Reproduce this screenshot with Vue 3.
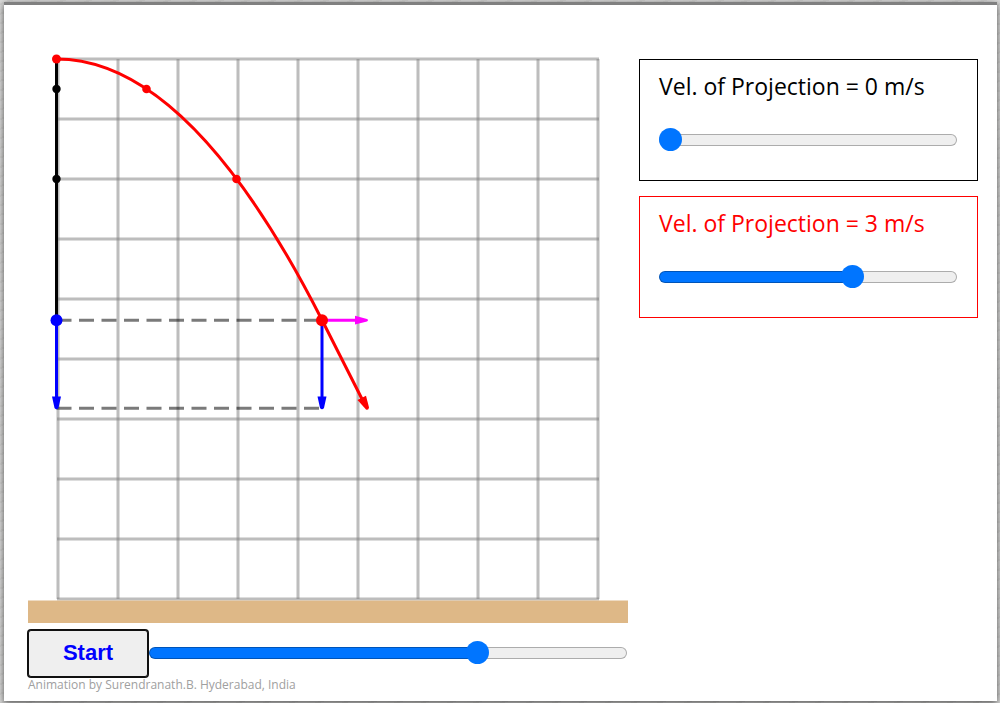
<script setup>
import { reactive, computed } from 'vue'

const state = reactive({ first: 0, second: 3, time: 70 })

const gridX = Array.from({ length: 10 }, (_, i) => 58 + i * 60)
const gridY = Array.from({ length: 10 }, (_, i) => 59 + i * 60)

const maxSpeed = 4.5
const fill = (ratio) => ({
  '--fill': `calc(12px + (100% - 24px) * ${ratio})`
})
const firstFill = computed(() => (Number(state.first) === 0 ? { '--fill': '0px' } : fill(state.first / maxSpeed)))
const secondFill = computed(() => fill(state.second / maxSpeed))
const timeFill = computed(() => fill(state.time / 100))
</script>

<template>
  <main class="sheet">
    <section class="stage">
      <svg class="plot" viewBox="28 23 600 600" role="img" aria-label="Projectile paths">
        <g class="grid">
          <line v-for="x in gridX" :key="'x' + x" :x1="x" y1="59" :x2="x" y2="599" />
          <line v-for="y in gridY" :key="'y' + y" x1="57" :y1="y" x2="599" :y2="y" />
        </g>
        <rect class="ground" x="28" y="600.5" width="600" height="22.5" />

        <path d="M56.5 59V320" stroke="#000" stroke-width="3" />
        <circle cx="56.5" cy="89" r="4.2" />
        <circle cx="56.5" cy="179" r="4.2" />

        <g class="guides">
          <line x1="56.5" y1="320.3" x2="322" y2="320.3" />
          <line x1="56.5" y1="408.3" x2="322" y2="408.3" />
        </g>

        <g fill="#00f">
          <path d="M56.5 320V400M322 320V400" stroke="#00f" stroke-width="3" />
          <path d="M52 396.5H61L58.5 408Q56.5 410.5 54.5 408Z" />
          <path d="M317.5 396.5H326.5L324 408Q322 410.5 320 408Z" />
          <circle cx="56.5" cy="320.2" r="6" />
        </g>

        <g fill="#f0f">
          <path d="M322 320.2H358" stroke="#f0f" stroke-width="3" />
          <path d="M355 315.8V324.6L367 321.5Q369 320.2 367 319Z" />
        </g>

        <g fill="#f00">
          <path class="trajectory" d="M56.5 59Q189.5 59 322 320L363 401" />
          <path d="M357.5 400L366 395.8L369 407.5Q368.5 410.5 366 409.5Z" />
          <circle cx="56.5" cy="59" r="4.5" />
          <circle cx="146.5" cy="89" r="4.3" />
          <circle cx="236.5" cy="179" r="4.3" />
          <circle cx="322" cy="320.2" r="6" />
        </g>
      </svg>

      <div class="playback">
        <button class="start" type="button">Start</button>
        <input v-model="state.time" class="slider" :style="timeFill" type="range" min="0" max="100" step="0.5" aria-label="Time">
      </div>
      <p class="credit">Animation by Surendranath.B. Hyderabad, India</p>
    </section>

    <aside class="controls">
      <div class="control">
        <label for="speed-first">Vel. of Projection = {{ state.first }} m/s</label>
        <input id="speed-first" v-model="state.first" class="slider" :style="firstFill" type="range" min="0" :max="maxSpeed" step="0.5">
      </div>
      <div class="control control-red">
        <label for="speed-second">Vel. of Projection = {{ state.second }} m/s</label>
        <input id="speed-second" v-model="state.second" class="slider" :style="secondFill" type="range" min="0" :max="maxSpeed" step="0.5">
      </div>
    </aside>
  </main>
</template>

<style>
html {
  background: repeating-linear-gradient(160deg, #d9d9d8 0 3px, #d2d2d1 3px 5px, #dcdcdb 5px 9px);
}
</style>

<style scoped>
.sheet {
  box-sizing: border-box;
  display: grid;
  grid-template-columns: 600fr 339fr;
  column-gap: 11px;
  align-items: start;
  margin: 2px 3px 2px 4px;
  padding: 18px 19px 8px 24px;
  border-top: 3px solid #808080;
  background: #fff;
  box-shadow: 0 2px 7px rgba(0, 0, 0, 0.65);
  font-family: "Open Sans", "Noto Sans", sans-serif;
}

.plot {
  display: block;
  width: 100%;
  height: auto;
}

.grid line {
  stroke: #808080;
  stroke-opacity: 0.52;
  stroke-width: 3;
}

.ground {
  fill: #deb887;
}

.guides line {
  stroke: #000;
  stroke-opacity: 0.52;
  stroke-width: 3;
  stroke-dasharray: 15 7.5;
}

.trajectory {
  fill: none;
  stroke: #f00;
  stroke-width: 3;
}

.playback {
  display: flex;
  align-items: center;
  gap: 1px;
  margin-top: 7px;
}

.start {
  flex: none;
  width: 120px;
  height: 47px;
  padding: 0 0 2px;
  border: 1px solid #101010;
  border-radius: 3px;
  background: #efefef;
  box-shadow: 0 0 0 1px #101010;
  color: #00f;
  font: bold 22px "Liberation Sans", Arial, sans-serif;
}

.slider {
  flex: 1;
  display: block;
  min-width: 0;
  width: 100%;
  height: 24px;
  margin: 0;
  background: transparent;
  appearance: none;
}

.slider::-webkit-slider-runnable-track {
  box-sizing: border-box;
  height: 12px;
  border: 1px solid rgba(0, 0, 0, 0.28);
  border-radius: 6px;
  background: linear-gradient(#0075ff, #0075ff) border-box 0 0 / var(--fill) 100% no-repeat, #efefef;
  background-clip: border-box;
}

.slider::-webkit-slider-thumb {
  box-sizing: border-box;
  width: 23px;
  height: 23px;
  margin: -7px -1px 0;
  border: 0;
  border-radius: 50%;
  background: #0075ff;
  appearance: none;
}

.playback .slider {
  margin: 0 1px 2px 0;
}

.credit {
  margin: 0;
  color: #a0a0a0;
  font-size: 12px;
  line-height: 16px;
}

.controls {
  display: grid;
  gap: 15px;
  padding-top: 36px;
}

.control {
  box-sizing: border-box;
  padding: 13px 20px 28px 19px;
  border: 1px solid currentColor;
  color: #000;
}

.control-red {
  color: #f00;
}

.control label {
  display: block;
  margin-bottom: 29px;
  font-size: 23px;
  line-height: 26px;
  white-space: nowrap;
}
</style>
